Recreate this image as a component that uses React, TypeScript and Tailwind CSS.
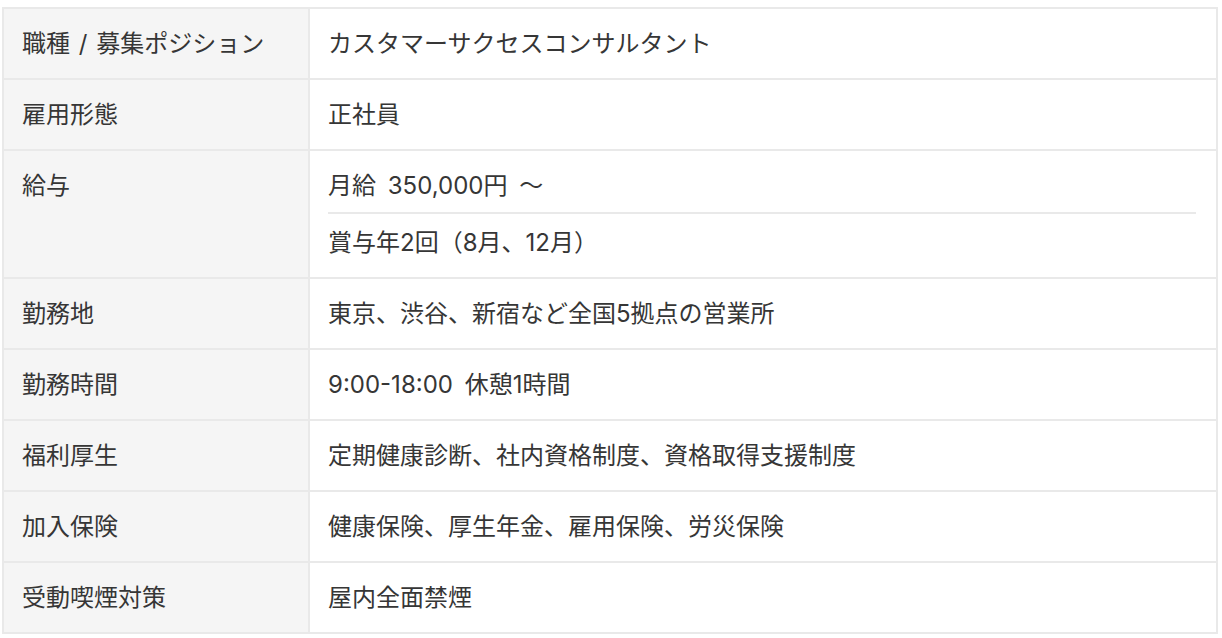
// 募集要項テーブル
const rows: { label: string; values: string[] }[] = [
  { label: "職種 / 募集ポジション", values: ["カスタマーサクセスコンサルタント"] },
  { label: "雇用形態", values: ["正社員"] },
  { label: "給与", values: ["月給 350,000円 〜", "賞与年2回（8月、12月）"] },
  { label: "勤務地", values: ["東京、渋谷、新宿など全国5拠点の営業所"] },
  { label: "勤務時間", values: ["9:00-18:00 休憩1時間"] },
  { label: "福利厚生", values: ["定期健康診断、社内資格制度、資格取得支援制度"] },
  { label: "加入保険", values: ["健康保険、厚生年金、雇用保険、労災保険"] },
  { label: "受動喫煙対策", values: ["屋内全面禁煙"] },
];

export default function App() {
  return (
    <div
      className="min-h-[638px] bg-white pt-[7px] pl-[2px] text-[24px] leading-[37px] text-[#363636]"
      style={{ fontFamily: 'Inter, "Noto Sans CJK JP", sans-serif' }}
    >
      <div className="w-[1216px] border-2 border-[#e9e9e9]">
        {rows.map((row, i) => (
          <div
            key={row.label}
            className={`flex ${i > 0 ? "border-t-2 border-[#e9e9e9]" : ""}`}
          >
            {/* 見出し */}
            <div className="w-[306px] shrink-0 border-r-2 border-[#e9e9e9] bg-[#f5f5f5] py-4 pl-[18px] [word-spacing:2px]">
              {row.label}
            </div>
            {/* 内容 */}
            <div className="flex-1 py-4 pl-[18px] pr-5 [word-spacing:5px]">
              {row.values.map((v, j) => (
                <div
                  key={v}
                  className={
                    row.values.length > 1 && j < row.values.length - 1
                      ? "border-b-2 border-[#e9e9e9] pb-2"
                      : j > 0
                        ? "pt-[10px]"
                        : ""
                  }
                >
                  {v}
                </div>
              ))}
            </div>
          </div>
        ))}
      </div>
    </div>
  );
}
